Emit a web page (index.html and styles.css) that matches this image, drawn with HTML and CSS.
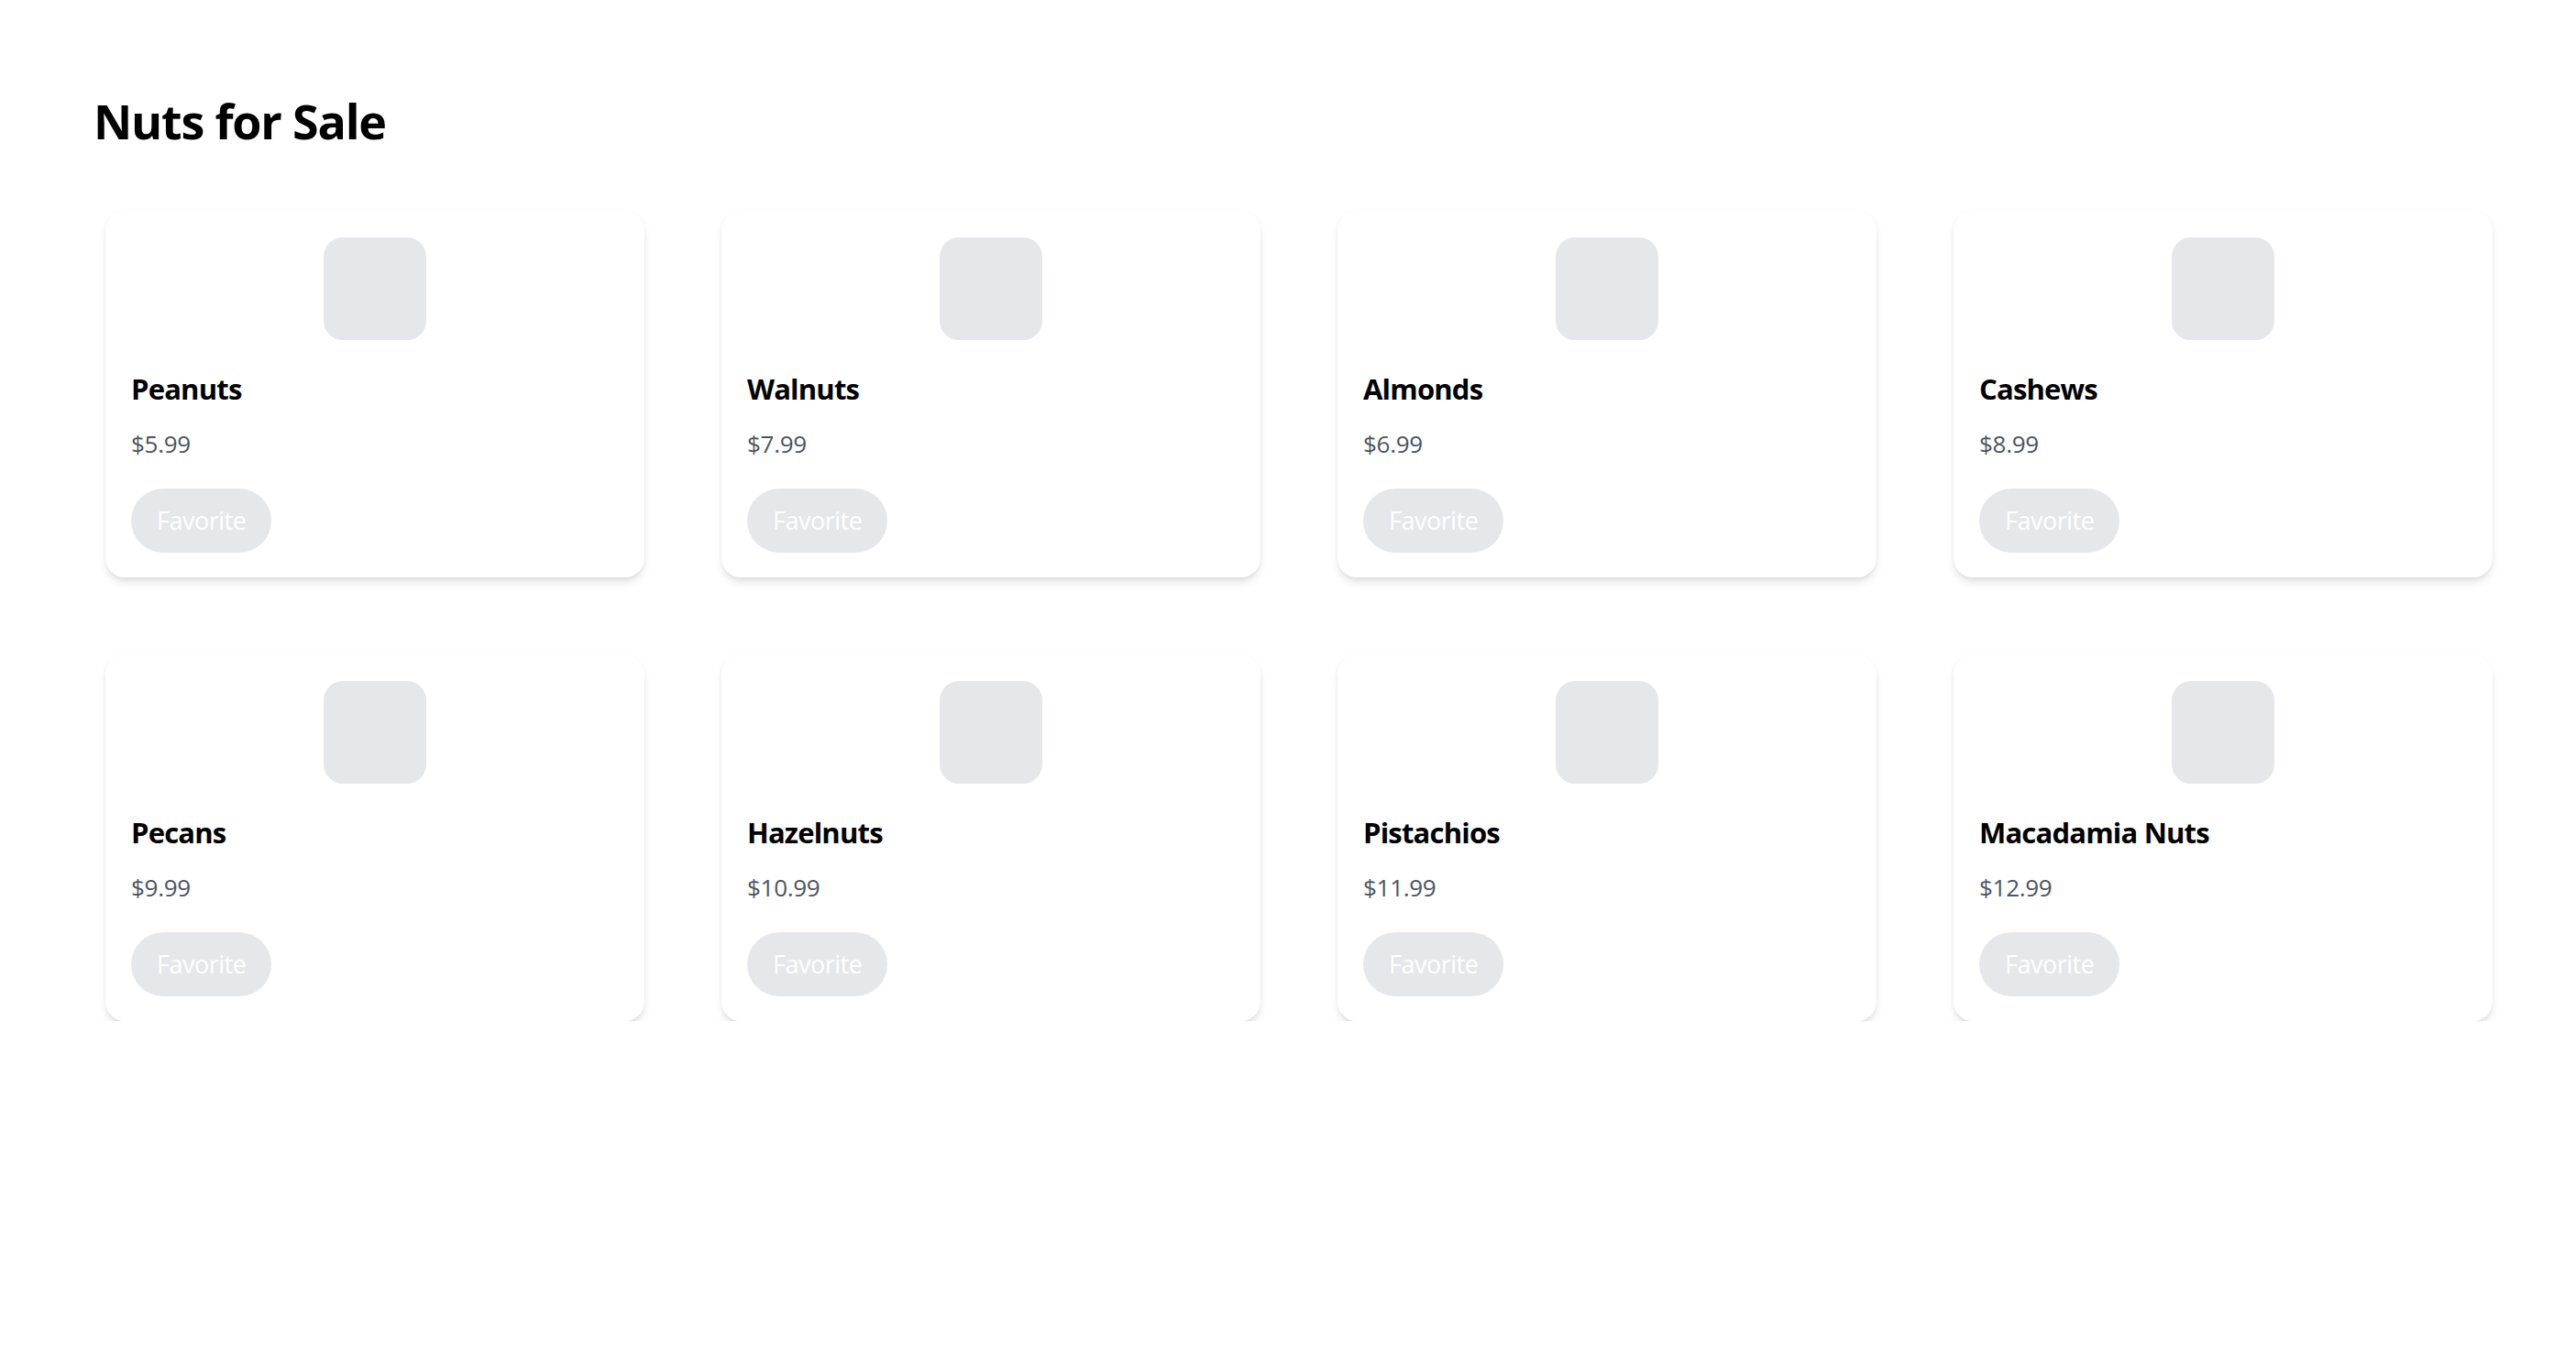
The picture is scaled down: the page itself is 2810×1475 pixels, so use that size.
FILE: index.html
```html
<!DOCTYPE html>
<html lang="en">
<head>
<meta charset="utf-8">
<title>Nuts for Sale</title>
<link rel="stylesheet" href="styles.css">
</head>
<body>
<main class="page">
  <h1 class="page-title">Nuts for Sale</h1>
  <div class="grid">
    <div class="card"><div class="thumb"></div><h2 class="name">Peanuts</h2><p class="price">$5.99</p><button class="fav">Favorite</button></div>
    <div class="card"><div class="thumb"></div><h2 class="name">Walnuts</h2><p class="price">$7.99</p><button class="fav">Favorite</button></div>
    <div class="card"><div class="thumb"></div><h2 class="name">Almonds</h2><p class="price">$6.99</p><button class="fav">Favorite</button></div>
    <div class="card"><div class="thumb"></div><h2 class="name">Cashews</h2><p class="price">$8.99</p><button class="fav">Favorite</button></div>
    <div class="card"><div class="thumb"></div><h2 class="name">Pecans</h2><p class="price">$9.99</p><button class="fav">Favorite</button></div>
    <div class="card"><div class="thumb"></div><h2 class="name">Hazelnuts</h2><p class="price">$10.99</p><button class="fav">Favorite</button></div>
    <div class="card"><div class="thumb"></div><h2 class="name">Pistachios</h2><p class="price">$11.99</p><button class="fav">Favorite</button></div>
    <div class="card"><div class="thumb"></div><h2 class="name">Macadamia Nuts</h2><p class="price">$12.99</p><button class="fav">Favorite</button></div>
  </div>
</main>
</body>
</html>
```
FILE: styles.css
```css
html, body {
  margin: 0;
  padding: 0;
  background: #ffffff;
}
body {
  font-family: "Open Sans", "Noto Sans", sans-serif;
  color: #000;
}
.page {
  padding: 100px 0 0 102px;
}
.page-title {
  margin: 0;
  font-size: 52px;
  line-height: 64px;
  font-weight: 700;
  letter-spacing: -1.2px;
}
.grid {
  margin: 66px 0 0 13px;
  display: grid;
  grid-template-columns: repeat(4, 588px);
  column-gap: 84px;
  row-gap: 84px;
}
.card {
  background: #fff;
  border-radius: 21px;
  padding: 29px 28px 27px 28px;
  box-shadow: 0 7px 11px -2px rgba(0,0,0,0.1), 0 3px 7px -3px rgba(0,0,0,0.1), 0 0 3px rgba(0,0,0,0.03);
  display: flex;
  flex-direction: column;
  align-items: flex-start;
}
.thumb {
  align-self: center;
  width: 112px;
  height: 112px;
  border-radius: 21px;
  background: #e5e7eb;
}
.name {
  margin: 32px 0 0 0;
  font-size: 31px;
  line-height: 42px;
  font-weight: 700;
  letter-spacing: -0.8px;
}
.price {
  margin: 21px 0 0 0;
  font-size: 26px;
  line-height: 36px;
  color: #4b5563;
  letter-spacing: -0.3px;
}
.fav {
  margin-top: 31px;
  font-family: inherit;
  font-size: 27px;
  line-height: 42px;
  padding: 14px 28px;
  border: none;
  border-radius: 9999px;
  background: #e5e7eb;
  color: #fff;
  letter-spacing: -0.5px;
}
```
